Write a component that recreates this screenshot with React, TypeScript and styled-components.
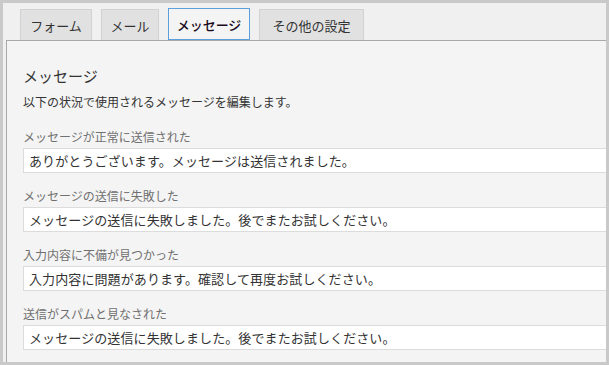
import React from 'react';
import styled, { createGlobalStyle } from 'styled-components';

const GlobalStyle = createGlobalStyle`
  html, body {
    margin: 0;
    padding: 0;
    background: #f0f0f0;
    overflow: hidden;
  }
  body {
    font-family: "Noto Sans CJK JP", "Noto Sans", sans-serif;
  }
`;

const tabs = [
  { label: 'フォーム', width: 72 },
  { label: 'メール', width: 58 },
  { label: 'メッセージ', width: 82, active: true },
  { label: 'その他の設定', width: 105 },
];

const fields = [
  { label: 'メッセージが正常に送信された', value: 'ありがとうございます。メッセージは送信されました。' },
  { label: 'メッセージの送信に失敗した', value: 'メッセージの送信に失敗しました。後でまたお試しください。' },
  { label: '入力内容に不備が見つかった', value: '入力内容に問題があります。確認して再度お試しください。' },
  { label: '送信がスパムと見なされた', value: 'メッセージの送信に失敗しました。後でまたお試しください。' },
];

export default function App() {
  return (
    <>
      <GlobalStyle />
      <Frame>
        <TabBar>
          {tabs.map((t) => (
            <Tab key={t.label} $width={t.width} $active={!!t.active}>
              {t.label}
            </Tab>
          ))}
        </TabBar>
        <Panel>
          <Heading>メッセージ</Heading>
          <Description>以下の状況で使用されるメッセージを編集します。</Description>
          {fields.map((f) => (
            <Field key={f.label}>
              <FieldLabel>{f.label}</FieldLabel>
              <TextInput type="text" defaultValue={f.value} />
            </Field>
          ))}
        </Panel>
      </Frame>
    </>
  );
}

const Frame = styled.div`
  box-sizing: border-box;
  width: 609px;
  height: 365px;
  border: 3px solid #c9c9c9;
  background: #f0f0f0;
  display: flex;
  flex-direction: column;
  overflow: hidden;
`;

const TabBar = styled.div`
  display: flex;
  align-items: flex-end;
  gap: 9px;
  padding: 5px 0 0 17px;
  height: 32px;
`;

const Tab = styled.div<{ $width: number; $active: boolean }>`
  box-sizing: border-box;
  width: ${(p) => p.$width}px;
  height: ${(p) => (p.$active ? 32 : 31)}px;
  display: flex;
  align-items: center;
  justify-content: center;
  font-size: 13px;
  color: ${(p) => (p.$active ? '#1a0a20' : '#333')};
  font-weight: ${(p) => (p.$active ? 500 : 400)};
  background: ${(p) => (p.$active ? '#f4f4f4' : '#e1e1e1')};
  border: 1px solid ${(p) => (p.$active ? '#5b9fdc' : '#d2d2d2')};
  border-bottom: ${(p) => (p.$active ? '1px solid #5b9fdc' : 'none')};
`;

const Panel = styled.div`
  flex: 1;
  margin-left: 3px;
  border: 1px solid #a9a9a9;
  border-right: none;
  border-bottom: none;
  background: #f4f4f4;
  padding: 25px 0 0 16px;
  overflow: hidden;
`;

const Heading = styled.h2`
  margin: 0;
  font-size: 15px;
  line-height: 20px;
  font-weight: 400;
  color: #333;
`;

const Description = styled.p`
  margin: 8px 0 0;
  font-size: 12px;
  line-height: 16px;
  color: #333;
`;

const Field = styled.div`
  display: flex;
  flex-direction: column;
  margin-top: 19px;

  & + & {
    margin-top: 15px;
  }
`;

const FieldLabel = styled.label`
  font-size: 12px;
  line-height: 16px;
  color: #707070;
`;

const TextInput = styled.input`
  box-sizing: border-box;
  margin-top: 3px;
  width: 640px;
  height: 25px;
  padding: 0 5px;
  border: 1px solid #dcdcdc;
  background: #fff;
  font-family: "Noto Sans CJK JP", "Noto Sans", sans-serif;
  font-size: 13px;
  letter-spacing: 0.1px;
  color: #333;
  outline: none;
`;
